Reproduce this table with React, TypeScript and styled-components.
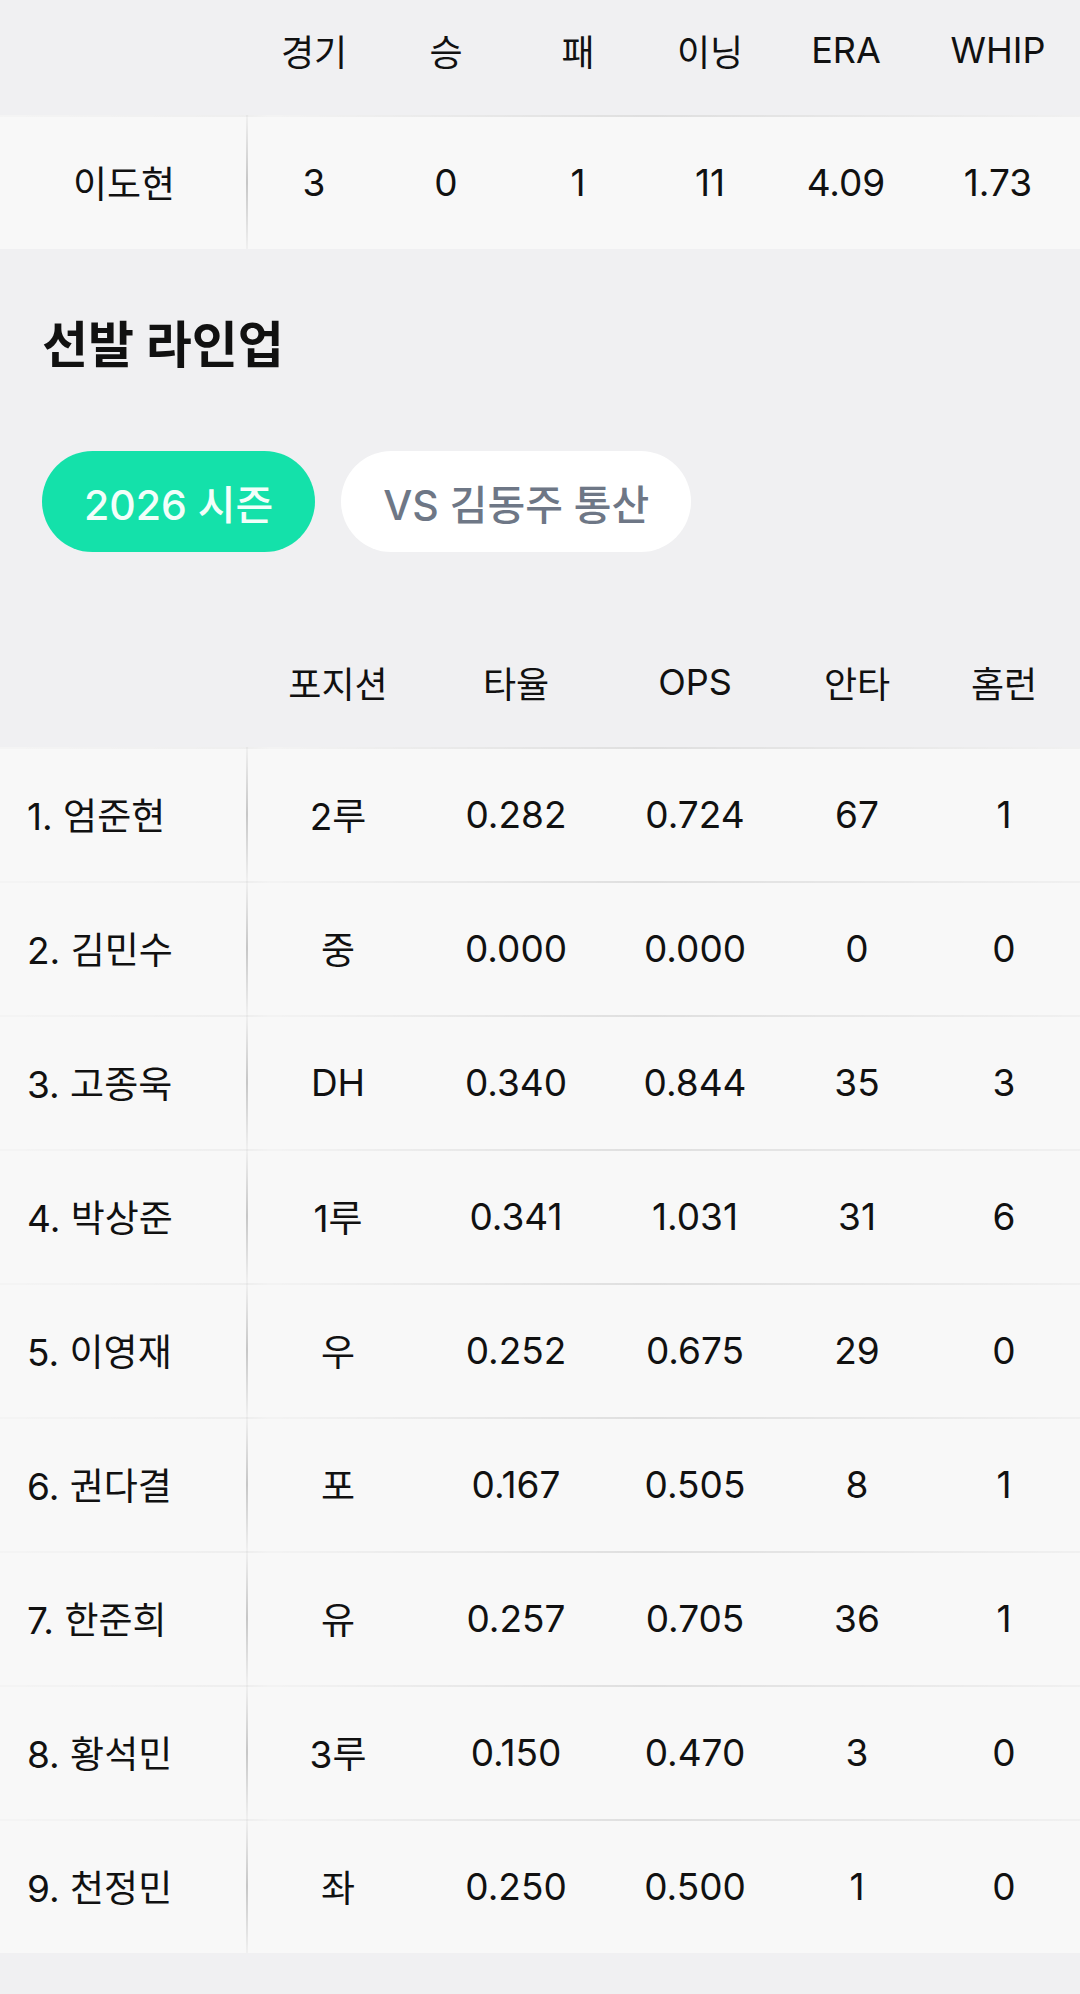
import styled, { createGlobalStyle } from 'styled-components'

const GlobalStyle = createGlobalStyle`
    html, body {
        margin: 0;
        padding: 0;
        background: #f0f0f2;
    }
    body {
        font-family: Inter, 'Noto Sans CJK KR', sans-serif;
        color: #111;
    }
`

type PitcherRow = {
    name: string
    games: string
    win: string
    lose: string
    inning: string
    era: string
    whip: string
}

type BatterRow = {
    name: string
    pos: string
    avg: string
    ops: string
    hits: string
    hr: string
}

const pitcher: PitcherRow = {
    name: '이도현',
    games: '3',
    win: '0',
    lose: '1',
    inning: '11',
    era: '4.09',
    whip: '1.73',
}

const lineup: BatterRow[] = [
    { name: '1. 엄준현', pos: '2루', avg: '0.282', ops: '0.724', hits: '67', hr: '1' },
    { name: '2. 김민수', pos: '중', avg: '0.000', ops: '0.000', hits: '0', hr: '0' },
    { name: '3. 고종욱', pos: 'DH', avg: '0.340', ops: '0.844', hits: '35', hr: '3' },
    { name: '4. 박상준', pos: '1루', avg: '0.341', ops: '1.031', hits: '31', hr: '6' },
    { name: '5. 이영재', pos: '우', avg: '0.252', ops: '0.675', hits: '29', hr: '0' },
    { name: '6. 권다결', pos: '포', avg: '0.167', ops: '0.505', hits: '8', hr: '1' },
    { name: '7. 한준희', pos: '유', avg: '0.257', ops: '0.705', hits: '36', hr: '1' },
    { name: '8. 황석민', pos: '3루', avg: '0.150', ops: '0.470', hits: '3', hr: '0' },
    { name: '9. 천정민', pos: '좌', avg: '0.250', ops: '0.500', hits: '1', hr: '0' },
]

const PITCHER_COLS = '248px 132px 132px 132px 132px 140px 164px'
const LINEUP_COLS = '248px 180px 176px 182px 142px 152px'

export default function App() {
    return (
        <>
            <GlobalStyle />
            <Page>
                <Table>
                    <HeaderRow cols={PITCHER_COLS}>
                        <span />
                        <span>경기</span>
                        <span>승</span>
                        <span>패</span>
                        <span>이닝</span>
                        <span>ERA</span>
                        <span>WHIP</span>
                    </HeaderRow>
                    <DataRow cols={PITCHER_COLS}>
                        <NameCell align="center">{pitcher.name}</NameCell>
                        <span>{pitcher.games}</span>
                        <span>{pitcher.win}</span>
                        <span>{pitcher.lose}</span>
                        <span>{pitcher.inning}</span>
                        <span>{pitcher.era}</span>
                        <span>{pitcher.whip}</span>
                    </DataRow>
                </Table>

                <Section>
                    <Title>선발 라인업</Title>
                    <TabContainer>
                        <Pill active>2026 시즌</Pill>
                        <Pill>VS 김동주 통산</Pill>
                    </TabContainer>
                </Section>

                <Table>
                    <HeaderRow cols={LINEUP_COLS}>
                        <span />
                        <span>포지션</span>
                        <span>타율</span>
                        <span>OPS</span>
                        <span>안타</span>
                        <span>홈런</span>
                    </HeaderRow>
                    {lineup.map((b) => (
                        <DataRow cols={LINEUP_COLS} key={b.name}>
                            <NameCell align="left">{b.name}</NameCell>
                            <span>{b.pos}</span>
                            <span>{b.avg}</span>
                            <span>{b.ops}</span>
                            <span>{b.hits}</span>
                            <span>{b.hr}</span>
                        </DataRow>
                    ))}
                </Table>
            </Page>
        </>
    )
}

// the page is scrolled a little, so the top header is cut off
const Page = styled.div`
    width: 1080px;
    min-height: 2010px;
    margin-top: -15px;
    background: #f0f0f2;
    overflow: hidden;
`

const Table = styled.div`
    display: flex;
    flex-direction: column;
`

const HeaderRow = styled.div<{ cols: string }>`
    display: grid;
    grid-template-columns: ${({ cols }) => cols};
    height: 130px;
    align-items: center;

    span {
        text-align: center;
        font-size: 36px;
        font-weight: 400;
        color: #111;
    }
`

const DataRow = styled.div<{ cols: string }>`
    position: relative;
    display: grid;
    grid-template-columns: ${({ cols }) => cols};
    height: 134px;
    align-items: center;
    background: #f8f8f8;

    &::before {
        content: '';
        position: absolute;
        left: 0;
        right: 0;
        top: 0;
        height: 2px;
        background: linear-gradient(
            to right,
            rgba(0, 0, 0, 0.015) 0%,
            rgba(0, 0, 0, 0.04) 23%,
            rgba(0, 0, 0, 0.02) 25%,
            rgba(0, 0, 0, 0.1) 60%,
            rgba(0, 0, 0, 0.03) 100%
        );
    }

    span {
        text-align: center;
        font-size: 37px;
        color: #111;
    }
`

const NameCell = styled.span<{ align: 'left' | 'center' }>`
    position: relative;
    align-self: stretch;
    display: flex;
    align-items: center;
    justify-content: ${({ align }) => (align === 'left' ? 'flex-start' : 'center')};
    padding-left: ${({ align }) => (align === 'left' ? '27px' : '0')};

    &::after {
        content: '';
        position: absolute;
        right: 0;
        top: 0;
        bottom: 0;
        width: 2px;
        background: linear-gradient(
            to bottom,
            rgba(0, 0, 0, 0.03),
            rgba(0, 0, 0, 0.2) 50%,
            rgba(0, 0, 0, 0.03)
        );
    }
`

const Section = styled.div`
    padding: 66px 42px 65px;
`

const Title = styled.h2`
    margin: 0;
    font-size: 50px;
    line-height: 60px;
    font-weight: 700;
    color: #111;
`

const TabContainer = styled.div`
    display: flex;
    gap: 26px;
    margin-top: 76px;
`

const Pill = styled.div<{ active?: boolean }>`
    height: 101px;
    padding: 0 42px;
    display: flex;
    align-items: center;
    border-radius: 51px;
    font-size: 41px;
    font-weight: 500;
    background: ${({ active }) => (active ? '#14e1aa' : '#fff')};
    color: ${({ active }) => (active ? '#f2fffa' : '#6e7786')};
`
